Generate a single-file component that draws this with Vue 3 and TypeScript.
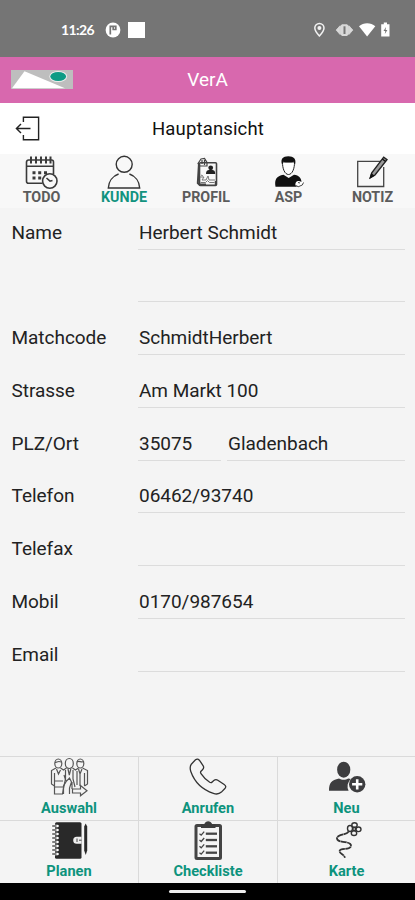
<script setup lang="ts">
import { ref } from 'vue'

type TabId = 'todo' | 'kunde' | 'profil' | 'asp' | 'notiz'
interface Tab { id: TabId; label: string }
interface Row { label: string; values: string[] }

const tabs: Tab[] = [
  { id: 'todo', label: 'TODO' },
  { id: 'kunde', label: 'KUNDE' },
  { id: 'profil', label: 'PROFIL' },
  { id: 'asp', label: 'ASP' },
  { id: 'notiz', label: 'NOTIZ' },
]
const active = ref<TabId>('kunde')

const rows: Row[] = [
  { label: 'Name', values: ['Herbert Schmidt'] },
  { label: '', values: [''] },
  { label: 'Matchcode', values: ['SchmidtHerbert'] },
  { label: 'Strasse', values: ['Am Markt 100'] },
  { label: 'PLZ/Ort', values: ['35075', 'Gladenbach'] },
  { label: 'Telefon', values: ['06462/93740'] },
  { label: 'Telefax', values: [''] },
  { label: 'Mobil', values: ['0170/987654'] },
  { label: 'Email', values: [''] },
]

const actions: string[] = ['Auswahl', 'Anrufen', 'Neu', 'Planen', 'Checkliste', 'Karte']
const spiral: number[] = [5, 9, 13, 17, 21, 25, 29, 33]
const checks: number[] = [12.7, 19, 25.3, 31.7]
</script>

<template>
  <div class="screen">
    <div class="status">
      <div class="status-left">
        <span class="time">11:26</span>
        <svg width="16" height="16" viewBox="0 0 16 16">
          <circle cx="8" cy="8" r="7.4" fill="#fff" />
          <path d="M5.3 12.5V4.4H8M8.2 4.4h2.6v3.1H8.2z" fill="none" stroke="#757575" stroke-width="1.7" />
        </svg>
        <span class="square"></span>
      </div>
      <svg width="78" height="18" viewBox="0 0 78 18">
        <path d="M7.4 2.4a4.6 4.6 0 0 1 4.6 4.6c0 3-4.600 8-4.600 8S2.800 10 2.800 7a4.600 4.600 0 0 1 4.600-4.600z" fill="none" stroke="#f2f2f2" stroke-width="1.500" />
        <circle cx="7.400" cy="7" r="2" fill="#f2f2f2" />
        <path d="M30 3.200h5l2.200 2.200v7.400L35 15h-5l-2.200-2.200V5.400z" fill="#d8d8d8" />
        <path d="M28 4.800l-3.800 4.300 3.800 4.300zM37 4.800l3.800 4.300-3.800 4.300z" fill="#dadada" stroke="#d0d0d0" />
        <path d="M32.500 5.300v7.700" stroke="#777" stroke-width="2" />
        <path d="M47 5.200c4.500-4 11.800-4 16.300 0L55.100 15.400z" fill="#fff" />
        <path d="M71.800 1.500h3.200v1.700h2.500v12.300H69.200V3.200h2.600z" fill="#fff" />
        <path d="M74 6l-2.500 4h1.800l-.5 3 2.600-4h-1.800z" fill="#757575" />
      </svg>
    </div>

    <header class="brand">
      <svg class="logo" width="62" height="19" viewBox="0 0 62 19">
        <path d="M0 0h62v19H0z" fill="#bebebe" />
        <path d="M1 18.300L13.500 1.300 54 18.300z" fill="#fff" />
        <ellipse cx="47.200" cy="6.500" rx="8.900" ry="5.500" fill="#eee" />
        <ellipse cx="47.200" cy="6.500" rx="7.900" ry="4.600" fill="#0d9b85" />
      </svg>
      <span>VerA</span>
    </header>

    <div class="titlebar">
      <svg class="back" width="26" height="26" viewBox="0 0 26 26" fill="none" stroke="#222" stroke-width="1.400">
        <path d="M8.400 7V2.200h15.200v22.600H8.400V20" />
        <path d="M15.500 13.500H1.600M6 8.900l-4.600 4.600L6 18.100" />
      </svg>
      <span class="title">Hauptansicht</span>
    </div>

    <nav class="tabs">
      <button v-for="t in tabs" :key="t.id" class="tab" :class="{ active: t.id === active }" @click="active = t.id">
        <svg v-if="t.id === 'todo'" width="36" height="36" viewBox="0 0 36 36" fill="none" stroke="#3a3a3a" stroke-width="1.600">
          <path d="M18.500 29.300H4.500a2 2 0 0 1-2-2V8a2 2 0 0 1 2-2h23a2 2 0 0 1 2 2v12M2.500 12.300h27" />
          <path d="M7 2.500v7M12 2.500v7M17 2.500v7M22 2.500v7M26.500 2.500v7" stroke-width="2" />
          <path d="M8.500 18.800h3M14.200 18.800h3M20 18.800h3M8.500 24h3M14.200 24h3" stroke-width="3" />
          <circle cx="25.800" cy="27" r="7.200" fill="#f9f9f9" />
          <path d="M22.500 24l3.500 3.200 2.500-.7" />
        </svg>
        <svg v-else-if="t.id === 'kunde'" width="36" height="36" viewBox="0 0 36 36" fill="none" stroke="#333" stroke-width="1.400">
          <circle cx="18.200" cy="10.300" r="8" />
          <path d="M12.600 20c-6 2-10 7.500-10.300 14h31.400c-.3-6.500-4.300-12-10.300-14" />
        </svg>
        <svg v-else-if="t.id === 'profil'" width="36" height="36" viewBox="0 0 36 36" fill="none" stroke="#444">
          <path d="M11 9L9.800 29l2.500 2.500" stroke-width="2" />
          <rect x="11.500" y="8.700" width="17" height="22.700" rx="1" stroke-width="1.600" />
          <path d="M10 9.500l3-4.500 3.500-.5 2.500 4v3.500h-7zM14 6v4M16.500 6v5" stroke-width="1.200" />
          <circle cx="22.700" cy="13.800" r="2.400" fill="#222" stroke="none" />
          <path d="M18 20c0-3.500 2-4.200 4.700-4.200s4.500.7 4.500 4.200z" fill="#222" stroke="none" />
          <path d="M12 23h4l-2 3h4l2-4 1 4h6M12.500 28.500h5l2-2 2 2h5M13 21l2 1" stroke-width="1" stroke="#777" />
          <path d="M11 12v7M12 30.500h6M27.800 27v4" stroke-width="2" />
        </svg>
        <svg v-else-if="t.id === 'asp'" width="36" height="36" viewBox="0 0 36 36" fill="#111">
          <path d="M4.500 32.700c-1.200-7 .8-10.700 8-12l5.200 3.300 5.300-3.300c5 .8 7 3 7.500 6.800l-3 5.200z" />
          <path d="M11.500 8c-.2 6.500 2.300 12.500 6 12.500s6.200-6 6-12.500z" fill="#fff" stroke="#222" />
          <path d="M11 10.500C9.300 5 11.800 2.300 17.300 2.300s8.200 2.700 6.800 8.200c-.6-1-.8-2-1.200-2.800-3.500.7-7.400.7-10.800 0-.5.8-.6 1.800-1.100 2.800z" />
          <path d="M24.300 31c0-3 1.700-4.500 3.700-4l4.500 1.500-2.500 3.500-4 1z" fill="#fff" />
          <path d="M24.800 31.500l2.500 1.200 4-1.700 1.200-2.500M27 28.500l2 .5" fill="none" stroke="#444" />
        </svg>
        <svg v-else width="36" height="36" viewBox="0 0 36 36" fill="none" stroke="#444">
          <path d="M26 7.300H2.700v25.200h26V13" stroke-width="1.300" />
          <path d="M15.500 23.500l1.300-4.700L28.700 3.200l3.300 2.500L20 21z" fill="#999" stroke="#222" stroke-width="1.400" />
          <path d="M27.300 5l3.300 2.500M15.300 23.700l1.200-3.500 2 1.500z" stroke="#111" stroke-width="1.400" />
        </svg>
        <span class="tab-label">{{ t.label }}</span>
      </button>
    </nav>

    <main class="form">
      <div v-for="(row, i) in rows" :key="i" class="row">
        <span class="label">{{ row.label }}</span>
        <div class="fields" :class="{ split: row.values.length > 1 }">
          <span v-for="(v, j) in row.values" :key="j" class="field">{{ v }}</span>
        </div>
      </div>
    </main>

    <footer class="actions">
      <button v-for="a in actions" :key="a" class="action">
        <svg v-if="a === 'Auswahl'" width="40" height="40" viewBox="0 0 40 40" fill="none" stroke="#555" stroke-width="1.200">
          <ellipse cx="9.300" cy="6.500" rx="3.500" ry="4.500" />
          <ellipse cx="20.300" cy="6.500" rx="4" ry="5" />
          <ellipse cx="31.300" cy="6.500" rx="3.500" ry="4.500" />
          <path d="M28 5c2-2 4 1 7-.5M6 5.500c2 0 3-2 6-.5" />
          <path d="M7 11l-4.500 2.500V27l3 2M11.500 11l3 2 3-2M23.500 11l3 2 3-2M33.500 11l5 2.500V27l-3 2" />
          <path d="M5.500 16v21h8l1-6 2-9V13M7.500 12l2 5 2-4M19 12l1.300 6 1.500-6M24 13v9l2 8M29.500 12l1.500 5 2-5M31 17v12M35.500 16v13M28 14v14" />
          <path d="M6 24h8M6 30h8M14.500 37v-8l3-5 3-3 2 4-2 6v6M17 24l-2-6M23 25v7" />
          <path d="M23.500 32h8v-3.500l6.500 5.300-6.500 5V36h-8z" fill="#f4f4f4" />
        </svg>
        <svg v-else-if="a === 'Anrufen'" width="40" height="40" viewBox="0 0 40 40" fill="none" stroke="#333" stroke-width="1.300">
          <path d="M3.300 7.200L7.500 2.800c1.500-1.300 3-.8 4.200.8l3.500 5.200c1 1.600.5 2.700-.7 3.900l-1.500 1.500c-.7.8-.6 1.600 0 2.500 2.300 3.500 5 6.200 8.700 8.600 1 .6 1.700.5 2.500-.3l1.600-1.400c1.200-1 2.500-1.300 4-.3l6.400 4.200c1.800 1.200 2 2.700.7 4l-3.500 3.600c-2.200 2-4.800 2.400-8 1.300C14.500 32.700 6.500 25 2.800 14.500c-1-3-1-5 .5-7.300z" />
        </svg>
        <svg v-else-if="a === 'Neu'" width="40" height="40" viewBox="0 0 40 40" fill="#3d3d3f">
          <ellipse cx="16.700" cy="12.700" rx="6.600" ry="8" />
          <path d="M2 33.700c0-8 2.500-10.500 10-12.200 2.700 1.800 6.600 1.800 9.300 0l2.500.6a9.500 9.500 0 0 0-2.200 11.600z" />
          <circle cx="30.200" cy="27.300" r="8.200" />
          <path d="M30.200 22.200v10.200M25.100 27.300h10.200" stroke="#fff" stroke-width="2.600" />
        </svg>
        <svg v-else-if="a === 'Planen'" width="40" height="40" viewBox="0 0 40 40" fill="#292929">
          <rect x="6" y="1.300" width="26.500" height="36.400" rx="1.500" />
          <path v-for="y in spiral" :key="y" :d="`M8.500 ${y}H3.500`" stroke="#fff" stroke-width="2.600" stroke-linecap="round" />
          <path v-for="y in spiral" :key="'r' + y" :d="`M7.500 ${y}H3.200`" stroke="#292929" stroke-width="1.200" />
          <path d="M32.500 15.700h-4.800a3.500 3.500 0 0 0 0 7h4.800z" fill="#eee" />
          <path d="M28 17.500v3.500M30 19.200h2.500" stroke="#444" />
          <path d="M36.700 2.500l1.500 3v24l-1.500 4.500-1.500-4.500v-24z" />
        </svg>
        <svg v-else-if="a === 'Checkliste'" width="40" height="40" viewBox="0 0 40 40" fill="none" stroke="#444">
          <rect x="8" y="4.500" width="24.500" height="33" rx="1" stroke-width="3" />
          <path d="M13 7V3.300h3.200C17 1 18.500.2 20.200.2s3.300.8 4 3.100h3.300V7z" fill="#3d3d3d" stroke="none" />
          <g v-for="y in checks" :key="y">
            <path :d="`M17.800 ${y}h11.200`" stroke-width="2.300" />
            <path :d="`M11.500 ${y}l1.700 1.500 3-3.500`" stroke-width="1.300" />
          </g>
        </svg>
        <svg v-else width="40" height="40" viewBox="0 0 40 40" fill="none" stroke="#333" stroke-width="1.400">
          <ellipse cx="23" cy="7.500" rx="2.500" ry="3" />
          <ellipse cx="27.500" cy="4" rx="2.700" ry="2.300" />
          <ellipse cx="31.500" cy="8.300" rx="2.500" ry="2.300" />
          <ellipse cx="27" cy="12.200" rx="2.700" ry="2.300" />
          <circle cx="27.200" cy="8" r="1.500" />
          <path d="M21.500 10.500c-1 3-6.500 2.500-9.800 4.500-3.700 2.500-1.200 5.300 4.300 5.800s9.500 2.200 7.500 5.200-10 .8-10.800 3.800 4.200 3.200 5.300 7" stroke-width="1.800" stroke-dasharray="6 .4" />
        </svg>
        <span>{{ a }}</span>
      </button>
    </footer>
    <div class="gesture"><span></span></div>
  </div>
</template>

<style>
body { margin: 0; background: #f4f4f4; }
</style>

<style scoped>
.screen {
  width: 415px;
  height: 900px;
  display: flex;
  flex-direction: column;
  background: #f4f4f4;
  font-family: Roboto, sans-serif;
  color: #222;
  overflow: hidden;
}
svg { display: block; flex: none; }
button { border: 0; margin: 0; padding: 0; background: none; font: inherit; color: inherit; }
.status {
  flex: none;
  box-sizing: border-box;
  height: 56.500px;
  padding: 4px 25px 0 61px;
  display: flex;
  align-items: center;
  justify-content: space-between;
  background: #757575;
}
.status-left { display: flex; align-items: center; margin-top: -1px; }
.time { width: 44px; padding-top: 1px; color: #fff; font: 700 14px/18px Lato, sans-serif; letter-spacing: -.6px; }
.square { width: 16.500px; height: 16.500px; margin-left: 7px; background: #fff; }
.brand {
  flex: none;
  height: 46px;
  display: grid;
  grid-template-columns: 1fr auto 1fr;
  align-items: center;
  background: #d868ae;
  color: #fff;
  font-size: 19px;
}
.logo { margin-left: 11px; }
.titlebar {
  flex: none;
  height: 51px;
  display: grid;
  grid-template-columns: 1fr auto 1fr;
  align-items: center;
  background: #fff;
  color: #111;
  font-size: 18.500px;
  letter-spacing: .15px;
}
.title { padding: 2px 0 0 1px; }
.back { margin-left: 15px; }
.tabs { flex: none; height: 54px; display: grid; grid-template-columns: 83px 82px 82px 83px 85px; background: #f8f8f8; }
.tab { display: flex; flex-direction: column; align-items: center; color: #5c5c5c; font-size: 14.300px; font-weight: 700; line-height: 14px; }
.tab.active { color: #12937f; }
.form { flex: 1; }
.row { display: grid; grid-template-columns: 126px 1fr; height: 52.800px; padding: 0 10px 0 11.500px; align-items: start; font-size: 19px; letter-spacing: -.03px; }
.label { line-height: 50.400px; }
.fields { display: grid; grid-template-columns: 1fr; column-gap: 6px; }
.fields.split { grid-template-columns: 83px 1fr; }
.field { box-sizing: border-box; height: 42px; padding-left: 1.500px; border-bottom: 1.500px solid #dcdcdc; line-height: 50.400px; white-space: nowrap; }
.actions {
  flex: none;
  height: 127px;
  box-sizing: border-box;
  display: grid;
  grid-template-columns: 138px 138px 137px;
  grid-template-rows: 63px 62px;
  gap: 1px;
  padding-top: 1px;
  background: #dadada;
}
.action { display: flex; flex-direction: column; align-items: center; background: #f4f4f4; color: #0d937d; font-size: 14.600px; font-weight: 700; line-height: 21px; }
.action span { padding-top: 1px; }
.action:nth-child(n + 4) span { padding-top: 0; }
.gesture { flex: none; height: 17px; display: flex; align-items: center; justify-content: center; background: #000; }
.gesture span { width: 77px; height: 3px; border-radius: 2px; background: #eee; }
</style>
